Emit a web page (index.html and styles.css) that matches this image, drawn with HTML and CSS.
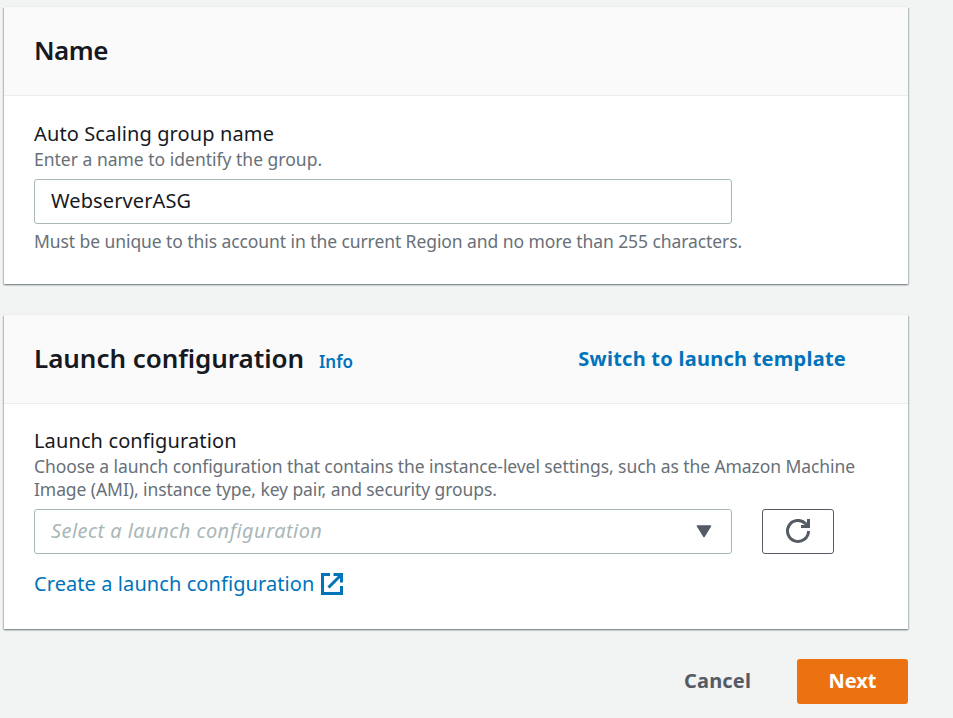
FILE: index.html
```html
<!DOCTYPE html>
<html lang="en">
<head>
<meta charset="utf-8">
<title>Create Auto Scaling group</title>
<link rel="stylesheet" href="styles.css">
</head>
<body>
<main class="page">
  <section class="card card-name">
    <header class="card-header"><h2 class="title title-name">Name</h2></header>
    <div class="card-body">
      <label class="label" for="name">Auto Scaling group name</label>
      <p class="hint hint-intro">Enter a name to identify the group.</p>
      <input class="field input" id="name" type="text" value="WebserverASG">
      <p class="hint constraint">Must be unique to this account in the current Region and no more than 255 characters.</p>
    </div>
  </section>
  <section class="card card-launch">
    <header class="card-header">
      <h2 class="title">Launch configuration</h2>
      <a class="info">Info</a>
      <a class="switch">Switch to launch template</a>
    </header>
    <div class="card-body">
      <div class="label">Launch configuration</div>
      <p class="hint">Choose a launch configuration that contains the instance-level settings, such as the Amazon Machine<br>Image (AMI), instance type, key pair, and security groups.</p>
      <div class="row">
        <div class="field select">
          <span class="placeholder">Select a launch configuration</span>
          <svg class="caret" viewBox="0 0 16 13"><path d="M1.5 1h13L8 11.5z" fill="#545b64" stroke="#545b64" stroke-width="1.5" stroke-linejoin="round"/></svg>
        </div>
        <button class="refresh" aria-label="Refresh">
          <svg viewBox="0 0 24 24" width="24" height="24" fill="none" stroke="#545b64" stroke-width="3"><path d="M22.5 12A10.5 10.5 0 1 1 19.5 4.6"/><path d="M24 0v9h-9V6h3l3-3V0z" fill="#545b64" stroke="none"/></svg>
        </button>
      </div>
      <a class="create">Create a launch configuration
        <svg viewBox="0 0 22 22" width="22" height="22" fill="none" stroke="#0073bb" stroke-width="3"><path d="M9 1.5H1.5v19h19V13"/><path d="M12.5 1.5h8v8M20 2L7.5 14.5"/></svg>
      </a>
    </div>
  </section>
  <footer class="actions">
    <button class="cancel">Cancel</button>
    <button class="next">Next</button>
  </footer>
</main>
</body>
</html>
```
FILE: styles.css
```css
* { box-sizing: border-box; }
body {
  margin: 0;
  height: 718px;
  overflow: hidden;
  background: #f2f3f3;
  color: #16191f;
  font-family: "Noto Sans", "Open Sans", sans-serif;
  font-size: 20px;
}
p, h2 { margin: 0; }
.page { width: 908px; padding: 7px 0 0 4px; }
.card {
  background: #fff;
  box-shadow: 0 1px 2px 0 rgba(0, 28, 36, .35), 1px 1px 1px 0 rgba(0, 28, 36, .15), -1px 1px 1px 0 rgba(0, 28, 36, .15);
}
.card-name { height: 277px; margin-bottom: 31px; }
.card-launch { height: 314px; }
.card-header {
  display: flex;
  align-items: flex-start;
  height: 89px;
  padding: 25px 62px 0 30px;
  background: #fafafa;
  border-bottom: 1px solid #eaeded;
}
.card-body { padding: 24px 30px 0; }
.title { font-size: 26px; line-height: 36px; font-weight: 650; letter-spacing: -.05px; white-space: nowrap; }
.title-name { letter-spacing: -.5px; }
.info { margin: 6px 0 0 15px; font-size: 17px; line-height: 32px; font-weight: 700; color: #0073bb; }
.title, .info { font-weight: 600; }
.switch { margin: 1px 0 0 auto; font-size: 20px; line-height: 36px; font-weight: 700; letter-spacing: .25px; color: #0073bb; }
.label { display: block; height: 28px; line-height: 27px; letter-spacing: .12px; }
.hint { font-size: 17.5px; line-height: 23px; letter-spacing: -.08px; color: #687078; white-space: nowrap; }
.hint-intro { letter-spacing: 0; }
.field {
  display: flex;
  align-items: center;
  width: 698px;
  height: 45px;
  border: 1px solid #aab7b8;
  border-radius: 3px;
  background: #fff;
  padding: 0 16px 2px;
}
.input { margin-top: 8px; font: inherit; color: inherit; letter-spacing: .1px; }
.constraint { margin-top: 6px; }
.card-launch .label { height: 27px; line-height: 25px; }
.row { display: flex; gap: 30px; margin-top: 8px; }
.placeholder { font-style: italic; letter-spacing: .45px; color: #aab7b8; }
.select { justify-content: space-between; padding-right: 19px; }
.caret { width: 16px; height: 13px; margin-top: 2px; }
.refresh {
  display: flex;
  align-items: center;
  justify-content: center;
  width: 72px;
  height: 45px;
  padding: 0 0 2px;
  border: 1px solid #545b64;
  border-radius: 3px;
  background: #fff;
}
.create { display: flex; align-items: center; gap: 7px; height: 30px; margin-top: 15px; padding-bottom: 1px; letter-spacing: .08px; color: #0073bb; }
.create svg { margin-top: 1px; }
.actions { display: flex; justify-content: flex-end; gap: 46px; margin-top: 30px; }
.actions button { height: 45px; border: 0; border-radius: 3px; font: 700 20px "Noto Sans", sans-serif; }
.actions .cancel { padding: 0 0 2px; background: none; color: #545b64; letter-spacing: .15px; }
.actions .next { width: 111px; padding: 0 0 2px; background: #ec7211; color: #fff; }
```
